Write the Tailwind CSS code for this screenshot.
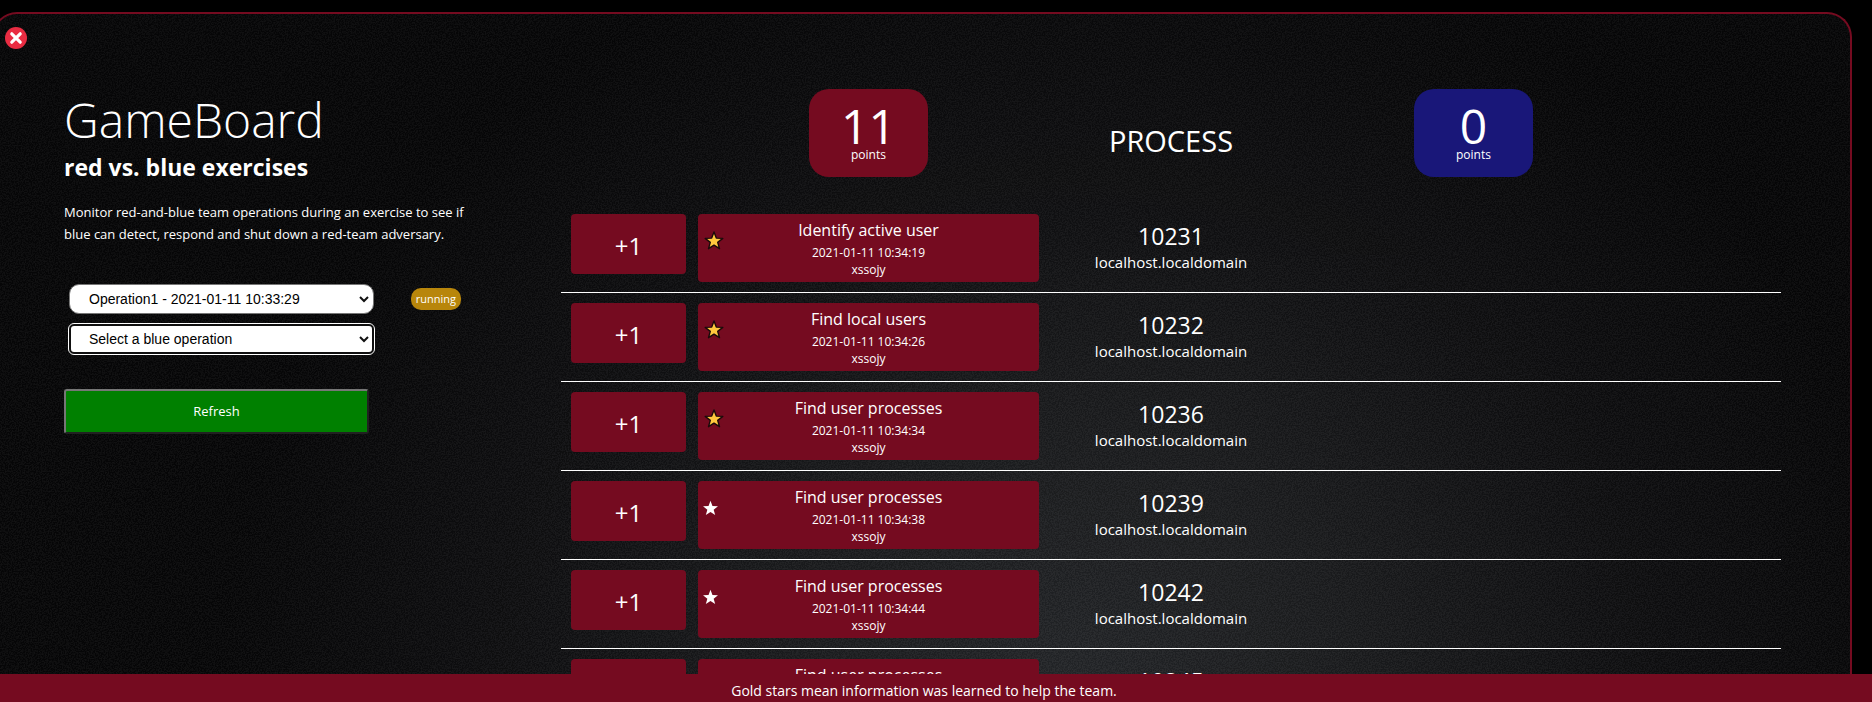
<!DOCTYPE html>
<html lang="en">
<head>
<meta charset="utf-8">
<meta name="viewport" content="width=device-width, initial-scale=1">
<title>GameBoard</title>
<script src="https://cdn.jsdelivr.net/npm/@tailwindcss/browser@4"></script>
</head>
<body class="flex h-screen flex-col overflow-hidden bg-black font-['Open_Sans','Noto_Sans',sans-serif] text-white">
<svg class="hidden" aria-hidden="true">
  <symbol id="star" viewBox="0 0 20 20"><path d="M10 1l2.3 6.1 6.5.3-5.1 4 1.8 6.3-5.5-3.6-5.5 3.6 1.8-6.3-5.1-4 6.5-.3z"/></symbol>
</svg>
<div class="min-h-0 flex-1 overflow-hidden pt-3">
  <main class="relative isolate mr-5 -ml-2 flex min-h-full items-start gap-[100px] overflow-hidden rounded-t-[25px] border-2 border-b-0 border-[#750b20] bg-[#060607] bg-[radial-gradient(ellipse_850px_760px_at_58%_92%,#25272a_0%,#1b1c1e_35%,#0f0f11_68%,#070708_100%)] pt-[75px] pr-[69px] pl-[70px]">
    <svg class="absolute inset-0 -z-10 size-full opacity-10" aria-hidden="true">
      <filter id="grain"><feTurbulence type="fractalNoise" baseFrequency="0.7" numOctaves="2"/><feColorMatrix values="1.6 0 0 0 -0.7  1.6 0 0 0 -0.7  1.6 0 0 0 -0.7  0 0 0 0 0.6"/></filter>
      <rect width="100%" height="100%" filter="url(#grain)"/>
    </svg>
    <button type="button" aria-label="Close" class="absolute top-[13px] left-[11px] size-[22px]">
      <svg viewBox="0 0 22 22" class="size-full"><circle cx="11" cy="11" r="11" fill="#e92c42"/><path d="M6.8 6.8l8.4 8.4M15.2 6.8l-8.4 8.4" stroke="#fff" stroke-width="3.2" stroke-linecap="round"/></svg>
    </button>

    <section class="w-[397px] shrink-0">
      <h1 class="text-5xl leading-[62px] font-light">GameBoard</h1>
      <h2 class="text-[23px] leading-8 font-bold">red vs. blue exercises</h2>
      <p class="mt-[18px] text-[13px] leading-[22px] whitespace-nowrap">Monitor red-and-blue team operations during an exercise to see if<br>blue can detect, respond and shut down a red-team adversary.</p>
      <form class="mt-[39px]">
        <div class="flex items-center justify-between">
          <div class="relative ml-[5px] w-[305px]">
            <select aria-label="Red operation" class="block h-[30px] w-full appearance-none rounded-[10px] border border-[#767676] bg-white pl-[19px] font-['Liberation_Sans',Arial,sans-serif] text-sm text-black"><option>Operation1 - 2021-01-11 10:33:29</option></select>
            <svg class="pointer-events-none absolute top-3 right-[5px] h-[7px] w-[10px]" viewBox="0 0 10 7"><path d="M1 1l4 4 4-4" fill="none" stroke="#111" stroke-width="2"/></svg>
          </div>
          <span class="rounded-[10px] bg-[#b8860b] px-[5px] text-[11px] leading-[22px]">running</span>
        </div>
        <div class="relative mt-[10px] ml-[5px] w-[305px]">
          <select aria-label="Blue operation" class="block h-[30px] w-full appearance-none rounded-[5px] border-2 border-[#101010] bg-white pl-[18px] font-['Liberation_Sans',Arial,sans-serif] text-sm text-black outline-1 outline-white"><option>Select a blue operation</option></select>
          <svg class="pointer-events-none absolute top-3 right-[5px] h-[7px] w-[10px]" viewBox="0 0 10 7"><path d="M1 1l4 4 4-4" fill="none" stroke="#111" stroke-width="2"/></svg>
        </div>
        <button type="button" class="mt-[35px] h-[45px] w-[305px] rounded-[3px] border-2 border-t-[#767676] border-r-[#212121] border-b-[#212121] border-l-[#767676] bg-[#008000] text-[13px]">Refresh</button>
      </form>
    </section>

    <table class="block min-w-0 flex-1 text-center">
      <thead class="block">
        <tr class="grid grid-cols-[115fr_341fr_240fr_341fr_115fr] gap-3 px-[10px] pb-[27px]">
          <td></td>
          <th scope="col" class="mx-auto h-[88px] w-[119px] rounded-[20px] bg-[#750b20] pt-3 font-normal"><span class="block text-5xl leading-[50px]">11</span><span class="block text-xs leading-[8px]">points</span></th>
          <th scope="col" class="pt-[30px] text-[29px] leading-[44px] font-normal">PROCESS</th>
          <th scope="col" class="mx-auto h-[88px] w-[119px] rounded-[20px] bg-[#191779] pt-3 font-normal"><span class="block text-5xl leading-[50px]">0</span><span class="block text-xs leading-[8px]">points</span></th>
          <td></td>
        </tr>
      </thead>
      <tbody id="rows" class="block"></tbody>
    </table>
  </main>
</div>
<footer class="z-10 h-7 shrink-0 bg-[#750b20] pt-[5px] pr-6 text-center text-sm leading-6">Gold stars mean information was learned to help the team.</footer>

<template id="row">
  <tr class="grid grid-cols-[115fr_341fr_240fr_341fr_115fr] items-start gap-3 border-b border-white p-[10px]">
    <td class="h-[60px] rounded bg-[#750b20] pt-0.5 text-2xl leading-[60px]">+1</td>
    <td class="flex h-[68px] items-start rounded bg-[#750b20] px-[6px]">
      <svg class="mt-[17px] w-5 shrink-0 overflow-visible"></svg>
      <div class="flex-1 pt-1">
        <div data-f="name" class="text-base leading-6"></div>
        <div data-f="time" class="text-xs leading-[22px]"></div>
        <div class="text-xs leading-3">xssojy</div>
      </div>
      <span class="w-5 shrink-0"></span>
    </td>
    <td class="pt-[7px]"><div data-f="pid" class="text-[23px] leading-[30px]"></div><div class="text-[15px] leading-[22px]">localhost.localdomain</div></td>
    <td></td>
    <td></td>
  </tr>
</template>
<script>
  const steps = [
    ["Identify active user", "2021-01-11 10:34:19", "10231", true],
    ["Find local users", "2021-01-11 10:34:26", "10232", true],
    ["Find user processes", "2021-01-11 10:34:34", "10236", true],
    ["Find user processes", "2021-01-11 10:34:38", "10239", false],
    ["Find user processes", "2021-01-11 10:34:44", "10242", false],
    ["Find user processes", "2021-01-11 10:34:49", "10245", false],
  ];
  const gold = '<use href="#star" width="20" height="20" fill="#ffc83d" stroke="#1a0a0a" stroke-width="1.4" stroke-linejoin="round"/>';
  const white = '<use href="#star" x="-2" y="2" width="17" height="17" fill="#fff"/>';
  for (const [name, time, pid, learned] of steps) {
    const row = document.getElementById("row").content.cloneNode(true);
    row.querySelector('[data-f="name"]').textContent = name;
    row.querySelector('[data-f="time"]').textContent = time;
    row.querySelector('[data-f="pid"]').textContent = pid;
    const svg = row.querySelector("svg");
    svg.setAttribute("viewBox", "0 0 20 20");
    svg.innerHTML = learned ? gold : white;
    document.getElementById("rows").append(row);
  }
</script>
</body>
</html>
